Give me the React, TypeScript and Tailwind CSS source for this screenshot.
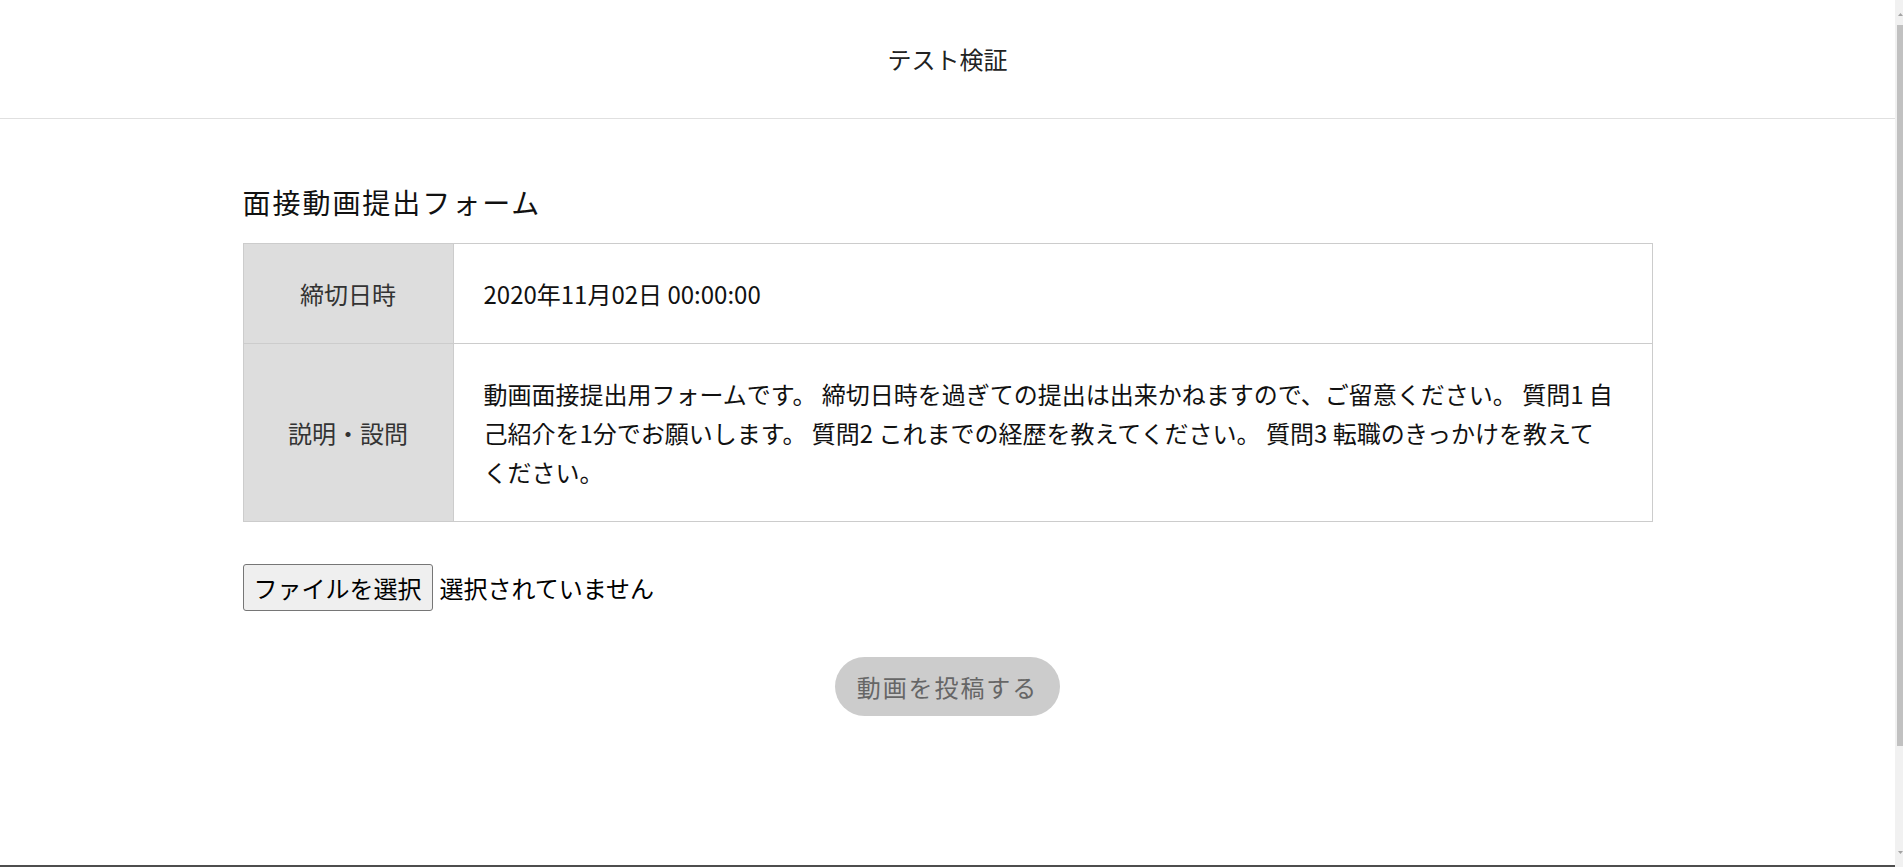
import React from "react";

const FONT = "font-['Noto_Sans_CJK_JP','Noto_Sans',sans-serif]";

function FakeScrollbar() {
  return (
    <div className="flex h-screen w-[8px] shrink-0 flex-col bg-[#f1f1f1]">
      <div className="flex h-[25px] items-start justify-center pt-[13px] pl-[2px]">
        <svg width="5" height="3" viewBox="0 0 5 3">
          <path d="M0 3 L2.5 0 L5 3 Z" fill="#a3a3a3" />
        </svg>
      </div>
      <div className="ml-[2px] h-[721px] w-[6px] bg-[#c1c1c1]" />
      <div className="flex flex-1 items-end justify-center pb-[13px] pl-[2px]">
        <svg width="5" height="3" viewBox="0 0 5 3">
          <path d="M0 0 L2.5 3 L5 0 Z" fill="#a3a3a3" />
        </svg>
      </div>
    </div>
  );
}

export default function App() {
  return (
    <div className={`flex h-screen w-full overflow-hidden bg-white text-[#222] ${FONT}`}>
      <div className="min-w-0 flex-1">
        <header className="flex h-[119px] items-center justify-center border-b border-[#e0e0e0]">
          <h1 className="text-[24px] leading-[38px] text-[#222]">テスト検証</h1>
        </header>

        <main className="mx-auto w-[1410px] pt-[64px] pb-[149px]">
          <h2 className="mb-[22px] text-[28px] leading-[38px] tracking-[0.07em] text-[#111]">
            面接動画提出フォーム
          </h2>

          <div className="border border-[#cccccc] text-[24px] leading-[39px]">
            <div className="flex border-b border-[#cccccc]">
              <div className="flex w-[210px] shrink-0 items-center justify-center border-r border-[#cccccc] bg-[#dddddd] text-[#333]">
                締切日時
              </div>
              <div className="flex-1 px-[30px] py-[30px] text-[#111]">2020年11月02日 00:00:00</div>
            </div>
            <div className="flex">
              <div className="flex w-[210px] shrink-0 items-center justify-center border-r border-[#cccccc] bg-[#dddddd] text-[#333]">
                説明・設問
              </div>
              <div className="flex-1 px-[30px] py-[30px] text-[#111]">
                動画面接提出用フォームです。 締切日時を過ぎての提出は出来かねますので、ご留意ください。 質問1 自
                <br />
                己紹介を1分でお願いします。 質問2 これまでの経歴を教えてください。 質問3 転職のきっかけを教えて
                <br />
                ください。
              </div>
            </div>
          </div>

          <div className="mt-[42px] flex items-center">
            <button
              type="button"
              className="h-[47px] rounded-[3px] border border-[#767676] bg-[#efefef] px-[10px] text-[24px] leading-[35px] text-black"
            >
              ファイルを選択
            </button>
            <span className="ml-[7px] text-[24px] leading-[35px] text-black">選択されていません</span>
          </div>

          <div className="mt-[46px] flex justify-center">
            <button
              type="button"
              disabled
              className="flex h-[59px] w-[225px] items-center justify-center rounded-full bg-[#cccccc] text-[24px] tracking-[0.08em] text-[#666666]"
            >
              動画を投稿する
            </button>
          </div>
        </main>

        <footer className="h-[129px] bg-[#4d4d4d]" />
      </div>
      <FakeScrollbar />
    </div>
  );
}
